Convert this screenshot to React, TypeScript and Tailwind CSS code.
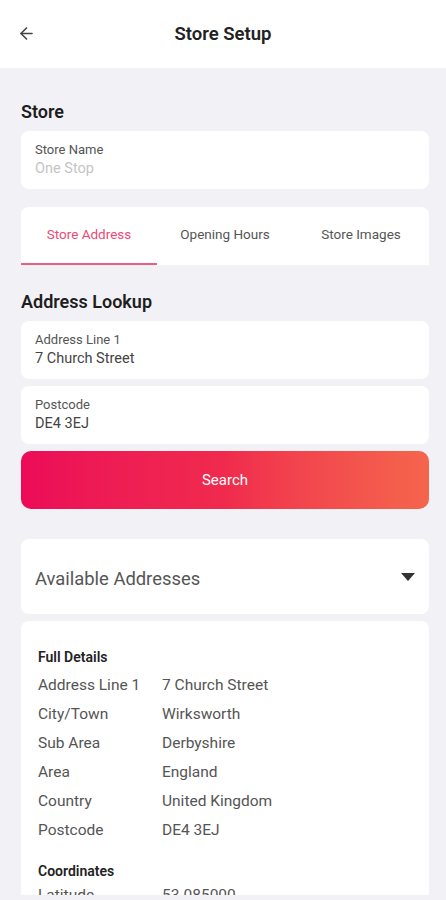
import { ArrowLeft } from 'lucide-react';

const details = [
  ['Address Line 1', '7 Church Street'],
  ['City/Town', 'Wirksworth'],
  ['Sub Area', 'Derbyshire'],
  ['Area', 'England'],
  ['Country', 'United Kingdom'],
  ['Postcode', 'DE4 3EJ'],
];

function Field({ label, value, muted }: { label: string; value: string; muted?: boolean }) {
  return (
    <div className="bg-white rounded-lg h-[58px] px-[14px] pt-[10px]">
      <p className="text-[13px] leading-[18px] text-[#555]">{label}</p>
      <p className={`text-[14.5px] leading-[20px] ${muted ? 'text-[#c4c4c4]' : 'text-[#444]'}`}>{value}</p>
    </div>
  );
}

export default function App() {
  const tabs = ['Store Address', 'Opening Hours', 'Store Images'];

  return (
    <div className="h-[900px] overflow-hidden bg-[#f2f2f6] font-['Roboto',sans-serif]">
      <div className="h-[68px] bg-white flex items-center relative">
        <ArrowLeft className="absolute left-[17px] top-[24px] w-[19px] h-[19px] text-[#444]" strokeWidth={2} />
        <h1 className="w-full text-center text-[18.5px] font-semibold text-[#222] pt-[1px]">Store Setup</h1>
      </div>

      <div className="h-[827px] overflow-hidden pl-[21px] pr-[17px]">
        <h2 className="text-[18px] font-semibold text-[#1e1e1e] mt-[33px] leading-[22px]">Store</h2>
        <div className="mt-[8px]">
          <Field label="Store Name" value="One Stop" muted />
        </div>

        <div className="mt-[18px] bg-white rounded-t-lg h-[58px] grid grid-cols-3">
          {tabs.map((t, i) => (
            <div key={t} className="relative flex items-center justify-center pb-[4px]">
              <span className={`text-[13.5px] ${i === 0 ? 'text-[#ec4a72]' : 'text-[#555]'}`}>{t}</span>
              {i === 0 && <div className="absolute left-0 right-0 bottom-0 h-[2px] bg-[#ec5f7e]" />}
            </div>
          ))}
        </div>

        <h2 className="text-[18px] font-semibold text-[#1e1e1e] mt-[26px] leading-[22px]">Address Lookup</h2>
        <div className="mt-[8px] flex flex-col gap-[7px]">
          <Field label="Address Line 1" value="7 Church Street" />
          <Field label="Postcode" value="DE4 3EJ" />
        </div>

        <button className="mt-[7px] w-full h-[58px] rounded-[10px] bg-gradient-to-r from-[#ec0a58] via-[#f02a4d] to-[#f5654c] text-white text-[15px] font-normal">
          Search
        </button>

        <div className="mt-[30px] bg-white rounded-lg h-[75px] flex items-center justify-between pl-[14px] pr-[14px] pt-[5px]">
          <span className="text-[18.4px] text-[#555]">Available Addresses</span>
          <svg width="14" height="8" viewBox="0 0 14 8" className="-mt-[5px]">
            <path d="M0 0h14L7 8z" fill="#333" />
          </svg>
        </div>

        <div className="mt-[7px] bg-white rounded-lg px-[17px] pt-[26px] pb-4">
          <h3 className="text-[14px] font-semibold text-[#222] leading-[20px]">Full Details</h3>
          <div className="mt-[4px]">
            {details.map(([k, v]) => (
              <div key={k} className="flex h-[29px] items-center text-[15.5px] text-[#555]">
                <span className="w-[124px]">{k}</span>
                <span>{v}</span>
              </div>
            ))}
          </div>
          <h3 className="mt-[16px] text-[14px] font-semibold text-[#222] leading-[20px]">Coordinates</h3>
          <div className="flex h-[29px] items-center text-[15.5px] text-[#555]">
            <span className="w-[124px]">Latitude</span>
            <span>53.085000</span>
          </div>
        </div>
      </div>
    </div>
  );
}
